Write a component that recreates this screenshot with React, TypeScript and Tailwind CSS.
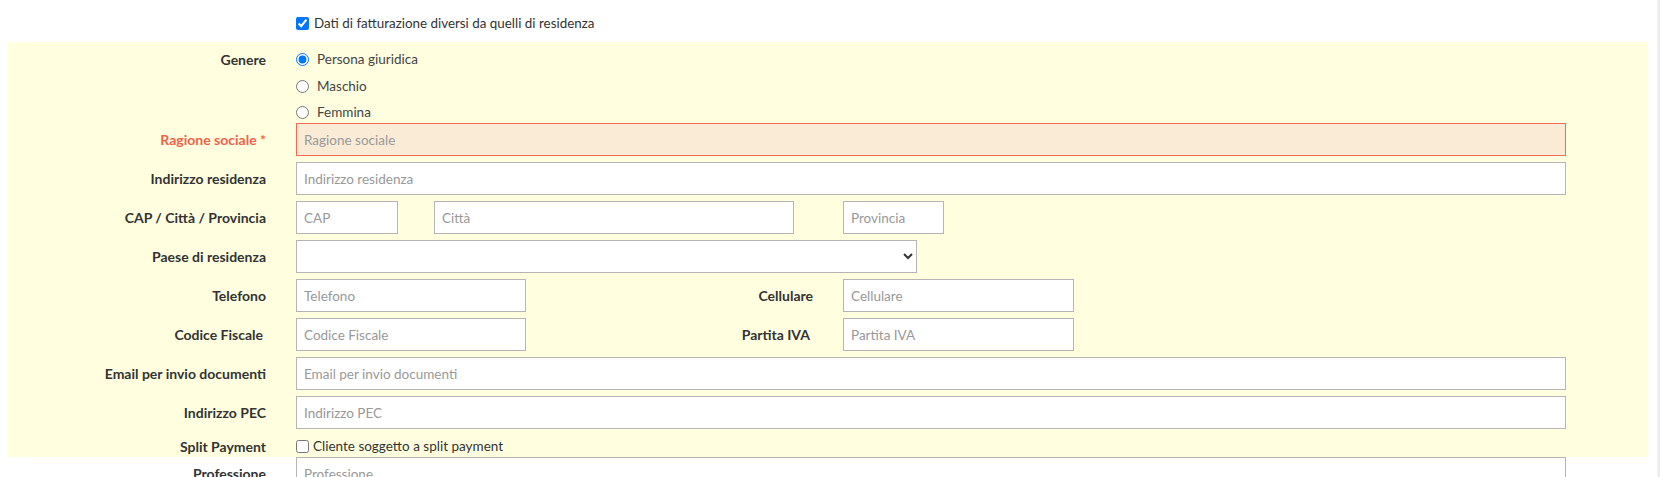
import React from "react";

const inputBase =
  "h-[33px] border border-[#b5b5b5] bg-white px-[7px] text-[13.5px] text-[#555] placeholder:text-[#999] outline-none";

function Label({ children, red = false, extra = "" }: { children: React.ReactNode; red?: boolean; extra?: string }) {
  return (
    <div
      className={`w-[258px] shrink-0 text-right text-[14px] font-bold ${red ? "text-[#f1614b]" : "text-[#333]"} ${extra}`}
    >
      {children}
    </div>
  );
}

function Row({ label, children, red = false, first = false, labelExtra = "" }: { label: string; children: React.ReactNode; red?: boolean; first?: boolean; labelExtra?: string }) {
  return (
    <div className={`flex h-[33px] items-center ${first ? "" : "mt-[6px]"}`}>
      <Label red={red} extra={labelExtra}>
        {label}
      </Label>
      <div className="ml-[30px] flex h-full items-center">{children}</div>
    </div>
  );
}

export default function App() {
  return (
    <div className="relative h-[477px] w-[1660px] overflow-hidden bg-white font-['Lato',sans-serif] text-[#444]">
      <div className="flex h-[42px] items-start pl-[296px] pt-[13px]">
        <label className="flex items-center gap-[5px] text-[13.4px] text-[#333]">
          <input type="checkbox" defaultChecked className="h-[13px] w-[13px]" />
          <span>Dati di fatturazione diversi da quelli di residenza</span>
        </label>
      </div>

      <div className="ml-[8px] w-[1640px] bg-[#ffffe0]">
        <div className="flex">
          <div className="w-[258px] shrink-0 pt-[4px]">
            <div className="flex h-[27px] items-center justify-end text-[14px] font-bold text-[#333]">Genere</div>
          </div>
          <div className="ml-[30px] pt-[4px] text-[13.5px] text-[#444]">
            <label className="flex h-[27px] items-center gap-[8px]">
              <input type="radio" name="g" defaultChecked className="h-[13px] w-[13px]" />
              <span>Persona giuridica</span>
            </label>
            <label className="flex h-[27px] items-center gap-[8px]">
              <input type="radio" name="g" className="h-[13px] w-[13px]" />
              <span>Maschio</span>
            </label>
            <label className="flex h-[23px] items-center gap-[8px] pt-[2px]">
              <input type="radio" name="g" className="h-[13px] w-[13px]" />
              <span>Femmina</span>
            </label>
          </div>
        </div>

        <Row label="Ragione sociale *" red first>
          <input
            className="h-[33px] w-[1270px] border border-[#ef6c57] bg-[#faebd7] px-[7px] text-[13.5px] placeholder:text-[#999] outline-none"
            placeholder="Ragione sociale"
          />
        </Row>
        <Row label="Indirizzo residenza">
          <input className={`${inputBase} w-[1270px]`} placeholder="Indirizzo residenza" />
        </Row>
        <Row label="CAP / Città / Provincia">
          <input className={`${inputBase} w-[102px]`} placeholder="CAP" />
          <input className={`${inputBase} ml-[36px] w-[360px]`} placeholder="Città" />
          <input className={`${inputBase} ml-[49px] w-[101px]`} placeholder="Provincia" />
        </Row>
        <Row label="Paese di residenza">
          <select className="h-[33px] w-[621px] border border-[#b5b5b5] bg-white px-[4px] text-[13px] text-[#333]">
            <option></option>
          </select>
        </Row>
        <Row label="Telefono">
          <input className={`${inputBase} w-[230px]`} placeholder="Telefono" />
          <div className="w-[287px] text-right text-[14px] font-bold text-[#333]">Cellulare</div>
          <input className={`${inputBase} ml-[30px] w-[231px]`} placeholder="Cellulare" />
        </Row>
        <Row label="Codice Fiscale" labelExtra="pr-[3px]">
          <input className={`${inputBase} w-[230px]`} placeholder="Codice Fiscale" />
          <div className="w-[287px] pr-[3px] text-right text-[14px] font-bold text-[#333]">Partita IVA</div>
          <input className={`${inputBase} ml-[30px] w-[231px]`} placeholder="Partita IVA" />
        </Row>
        <Row label="Email per invio documenti">
          <input className={`${inputBase} w-[1270px]`} placeholder="Email per invio documenti" />
        </Row>
        <Row label="Indirizzo PEC">
          <input className={`${inputBase} w-[1270px]`} placeholder="Indirizzo PEC" />
        </Row>
        <div className="flex h-[28px] items-center pt-[6px]">
          <Label>Split Payment</Label>
          <label className="ml-[30px] flex items-center gap-[4px] text-[13.5px] text-[#333]">
            <input type="checkbox" className="h-[13px] w-[13px]" />
            <span>Cliente soggetto a split payment</span>
          </label>
        </div>
      </div>

      <div className="ml-[8px] flex h-[33px] items-center">
        <Label>Professione</Label>
        <div className="ml-[30px] flex h-full items-center">
          <input className={`${inputBase} w-[1270px]`} placeholder="Professione" />
        </div>
      </div>

      <div className="absolute right-0 top-0 h-full w-[3px] border-l border-[#f3f3f3] bg-[#ececec]" />
    </div>
  );
}
